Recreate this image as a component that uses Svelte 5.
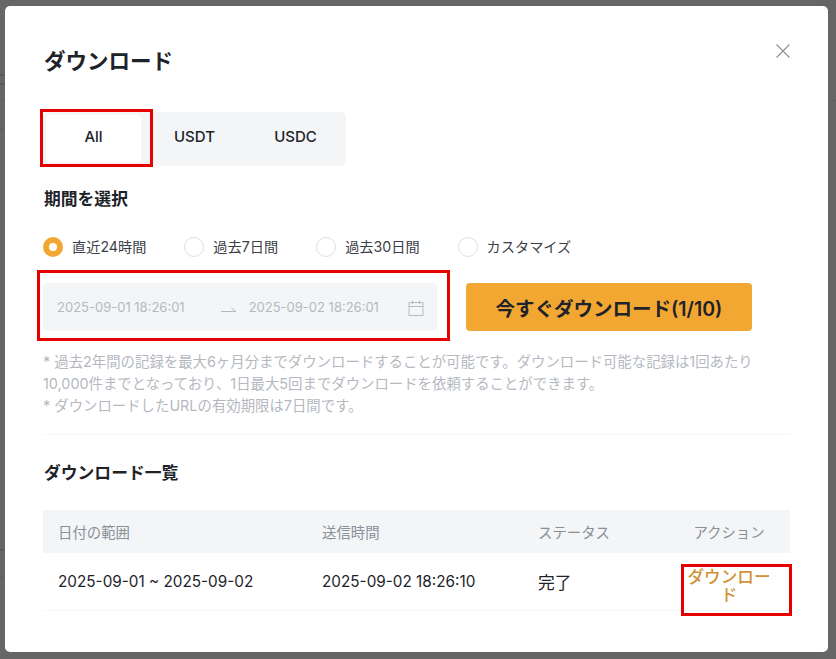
<script>
	const tabs = ['All', 'USDT', 'USDC'];
	const ranges = ['直近24時間', '過去7日間', '過去30日間', 'カスタマイズ'];
	let activeTab = 'All';
	let activeRange = '直近24時間';
</script>

<div class="page">
	<!-- bits of the page behind the dimmed overlay -->
	<div class="behind">
		<i class="scrap s1"></i>
		<i class="scrap s2"></i>
		<i class="scrap s3"></i>
		<i class="scrap s4"></i>
		<i class="scrap s5"></i>
		<i class="rule"></i>
	</div>

	<div class="modal">
		<button class="close" aria-label="close">
			<svg width="16" height="16" viewBox="0 0 16 16" fill="none" stroke="currentColor" stroke-width="1.1">
				<path d="M1.5 1.5l13 13M14.5 1.5l-13 13" />
			</svg>
		</button>

		<h2 class="title">ダウンロード</h2>

		<div class="tabs">
			{#each tabs as tab}
				<button class="tab" class:active={activeTab === tab} onclick={() => (activeTab = tab)}>
					<span>{tab}</span>
				</button>
			{/each}
		</div>

		<h3 class="label">期間を選択</h3>

		<div class="radios">
			{#each ranges as range}
				<button class="radio" onclick={() => (activeRange = range)}>
					<span class="dot" class:on={activeRange === range}></span>
					{range}
				</button>
			{/each}
		</div>

		<div class="actions">
			<div class="picker">
				<span class="date">2025-09-01 18:26:01</span>
				<svg class="arrow" width="16" height="8" viewBox="0 0 16 8" fill="none" stroke="currentColor">
					<path d="M0 6.5h15L10.5 3" />
				</svg>
				<span class="date">2025-09-02 18:26:01</span>
				<svg class="calendar" width="18" height="18" viewBox="0 0 18 18" fill="none" stroke="currentColor">
					<path d="M2 3.5h14v13H2zM2 7.5h14M5.5 1.5v3.5M12.5 1.5v3.5" />
				</svg>
			</div>
			<button class="download">今すぐダウンロード(1/10)</button>
		</div>

		<p class="note">
			* 過去2年間の記録を最大6ヶ月分までダウンロードすることが可能です。ダウンロード可能な記録は1回あたり<br />
			10,000件までとなっており、1日最大5回までダウンロードを依頼することができます。<br />
			* ダウンロードしたURLの有効期限は7日間です。
		</p>

		<hr class="divider" />

		<h3 class="label list">ダウンロード一覧</h3>

		<div class="table">
			<div class="row head">
				<div>日付の範囲</div>
				<div>送信時間</div>
				<div>ステータス</div>
				<div class="center">アクション</div>
			</div>
			<div class="row body">
				<div>2025-09-01 ~ 2025-09-02</div>
				<div>2025-09-02 18:26:10</div>
				<div class="done">完了</div>
				<div class="center link">ダウンロード</div>
			</div>
		</div>

		<!-- annotation boxes drawn over the shot -->
		<span class="mark mark-tab"></span>
		<span class="mark mark-date"></span>
		<span class="mark mark-action"></span>
	</div>
</div>

<style>
	:global(body) {
		margin: 0;
		background: #666;
	}

	.page {
		position: relative;
		height: 659px;
		padding: 6px 8px 7px 5px;
		box-sizing: border-box;
		overflow: hidden;
		font-family: Inter, 'Noto Sans CJK JP', sans-serif;
		color: #1e2329;
	}

	.behind {
		position: absolute;
		inset: 0;
	}

	.scrap {
		position: absolute;
		left: 0;
		width: 5px;
		height: 1px;
		background: #545b63;
	}

	.s1 {
		top: 74px;
		height: 2px;
	}

	.s2 {
		top: 83px;
		height: 2px;
	}

	.s3 {
		top: 128px;
		transform: rotate(-40deg);
	}

	.s4 {
		top: 549px;
		height: 2px;
	}

	.s5 {
		top: 577px;
		transform: rotate(-40deg);
	}

	.rule {
		position: absolute;
		left: 0;
		right: 0;
		top: 100px;
		height: 1px;
		background: #5f5f5f;
	}

	.modal {
		position: relative;
		height: 646px;
		box-sizing: border-box;
		padding: 39px 38px 0;
		background: #fff;
		border-radius: 5px;
	}

	button {
		font: inherit;
		color: inherit;
		border: 0;
		background: none;
		padding: 0;
	}

	.close {
		position: absolute;
		top: 37px;
		right: 37px;
		width: 16px;
		height: 16px;
		color: #8c8f94;
	}

	.close svg {
		display: block;
	}

	.title {
		margin: 0 0 0 1px;
		font-size: 21.5px;
		line-height: 32px;
		font-weight: 600;
	}

	.tabs {
		display: flex;
		width: 303px;
		height: 54px;
		margin-top: 35px;
		background: #f3f5f7;
		border-radius: 6px;
	}

	.tab {
		flex: 1;
		padding: 3px;
		font-size: 15px;
		font-weight: 500;
	}

	.tab span {
		display: block;
		line-height: 44px;
		padding-bottom: 4px;
		border-radius: 4px;
	}

	.tab.active span {
		background: #fff;
	}

	.label {
		margin: 21px 0 0 1px;
		font-size: 16.8px;
		line-height: 24px;
		font-weight: 600;
	}

	.radios {
		display: flex;
		gap: 38px;
		margin-top: 25px;
	}

	.radio {
		display: flex;
		align-items: center;
		gap: 9px;
		font-size: 14.2px;
		line-height: 22px;
		color: #3c4047;
	}

	.dot {
		box-sizing: border-box;
		width: 20px;
		height: 20px;
		border: 1px solid #dcdee2;
		border-radius: 50%;
	}

	.dot.on {
		border: 6px solid #f3a733;
		background: #fff;
	}

	.actions {
		display: flex;
		gap: 29px;
		margin-top: 25px;
	}

	.picker {
		display: flex;
		align-items: center;
		box-sizing: border-box;
		width: 394px;
		height: 48px;
		padding: 0 12px 0 14px;
		background: #f3f5f7;
		border-radius: 4px;
		color: #b5b9bf;
		font-size: 13px;
	}

	.date {
		white-space: nowrap;
	}

	.arrow {
		margin: 4px 12px 0 36px;
	}

	.calendar {
		margin: 2px 0 0 auto;
	}

	.download {
		width: 286px;
		height: 48px;
		background: #f3a733;
		border-radius: 4px;
		font-size: 19.5px;
		font-weight: 600;
		color: #1e2329;
	}

	.note {
		margin: 20px 0 0;
		font-size: 14.4px;
		line-height: 22px;
		color: #b5b9bf;
	}

	.divider {
		margin: 17px 0 0;
		border: 0;
		border-top: 1px solid #f3f5f7;
	}

	.label.list {
		margin-top: 26px;
	}

	.table {
		margin-top: 25px;
	}

	.row {
		display: grid;
		grid-template-columns: 264px 216px 149px 1fr;
		padding: 0 19px 0 15px;
		align-items: center;
	}

	.head {
		height: 43px;
		background: #f3f5f7;
		font-size: 14.4px;
		color: #8a8f97;
	}

	.body {
		height: 58px;
		box-sizing: border-box;
		font-size: 15.3px;
		border-bottom: 1px solid #f3f5f7;
	}

	.done {
		font-size: 16.8px;
	}

	.center {
		text-align: center;
	}

	.link {
		color: #d09239;
		font-size: 16.6px;
		font-weight: 500;
		line-height: 18px;
		margin-top: 8px;
	}

	.mark {
		position: absolute;
		box-sizing: border-box;
		border: 3px solid #e60000;
		pointer-events: none;
	}

	.mark-tab {
		left: 35px;
		top: 103px;
		width: 113px;
		height: 58px;
	}

	.mark-date {
		left: 32px;
		top: 264px;
		width: 413px;
		height: 71px;
	}

	.mark-action {
		left: 676px;
		top: 558px;
		width: 111px;
		height: 52px;
	}
</style>
